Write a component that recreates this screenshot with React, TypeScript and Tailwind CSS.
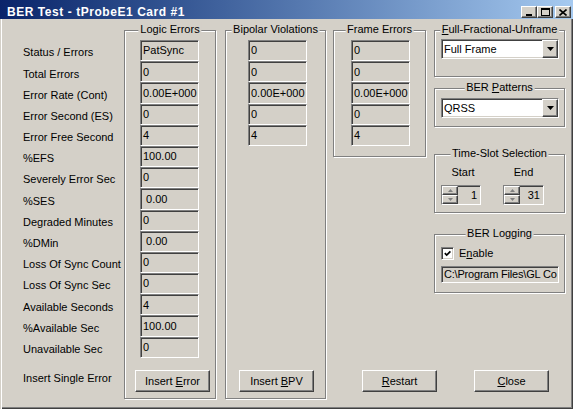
import React from 'react';

// classic win32 3d edges
const SUNKEN = 'border border-t-[#808080] border-l-[#808080] border-b-white border-r-white shadow-[inset_1px_1px_0_#404040,inset_-1px_-1px_0_#d4d0c8]';
const RAISED = 'border border-t-white border-l-white border-b-[#404040] border-r-[#404040] shadow-[inset_-1px_-1px_0_#808080]';
const ETCHED = 'border border-[#808080] shadow-[inset_1px_1px_0_#fff,1px_1px_0_#fff]';

const rows: [string, string][] = [
  ['Status / Errors', 'PatSync'],
  ['Total Errors', '0'],
  ['Error Rate (Cont)', '0.00E+000'],
  ['Error Second (ES)', '0'],
  ['Error Free Second', '4'],
  ['%EFS', '100.00'],
  ['Severely Error Sec', '0'],
  ['%SES', ' 0.00'],
  ['Degraded Minutes', '0'],
  ['%DMin', ' 0.00'],
  ['Loss Of Sync Count', '0'],
  ['Loss Of Sync Sec', '0'],
  ['Available Seconds', '4'],
  ['%Available Sec', '100.00'],
  ['Unavailable Sec', '0'],
];

const shortRows = ['0', '0', '0.00E+000', '0', '4'];

const Field = ({ v }: { v: string }) => (
  <div className={`${SUNKEN} h-full w-[59px] bg-[#d4d0c8] pl-[2px] flex items-center whitespace-pre`}>{v}</div>
);

const Group = ({ title, className, children }: { title: React.ReactNode; className: string; children?: React.ReactNode }) => (
  <div className={`relative ${ETCHED} ${className}`}>
    <span className="absolute left-1/2 -translate-x-1/2 top-[-9px] bg-[#d4d0c8] px-[2px] leading-[14px] whitespace-nowrap">{title}</span>
    {children}
  </div>
);

const Btn = ({ children }: { children: React.ReactNode }) => (
  <button type="button" className={`${RAISED} w-[75px] h-[22px] bg-[#d4d0c8] flex items-center justify-center`}>
    <span className="whitespace-pre">{children}</span>
  </button>
);

const Combo = ({ value }: { value: string }) => (
  <div className={`${SUNKEN} w-[118px] h-[20px] bg-white flex`}>
    <span className="flex-1 pl-[2px] flex items-center">{value}</span>
    <div className={`${RAISED} w-[16px] h-full bg-[#d4d0c8] flex items-center justify-center`}>
      <svg width="7" height="4" viewBox="0 0 7 4"><path d="M0 0h7L3.5 4z" fill="#000" /></svg>
    </div>
  </div>
);

const Spin = ({ v, className }: { v: string; className: string }) => (
  <div className={`${SUNKEN} h-[20px] bg-[#d4d0c8] flex ${className}`}>
    <div className="w-[16px] flex flex-col">
      <div className={`${RAISED} h-[9px] bg-[#d4d0c8] flex items-center justify-center`}>
        <svg width="5" height="3" viewBox="0 0 5 3"><path d="M2.5 0L5 3H0z" fill="#808080" /></svg>
      </div>
      <div className={`${RAISED} h-[9px] bg-[#d4d0c8] flex items-center justify-center`}>
        <svg width="5" height="3" viewBox="0 0 5 3"><path d="M0 0h5L2.5 3z" fill="#808080" /></svg>
      </div>
    </div>
    <span className="flex-1 text-right pr-[3px] flex items-center justify-end">{v}</span>
  </div>
);

const CapBtn = ({ children, className = '' }: { children: React.ReactNode; className?: string }) => (
  <div className={`${RAISED} w-[16px] h-[12px] bg-[#d4d0c8] flex items-center justify-center ${className}`}>{children}</div>
);

export default function App() {
  return (
    <div className="w-[573px] h-[409px] bg-[#d4d0c8] overflow-hidden flex flex-col font-['Liberation_Sans',Arial,sans-serif] text-[11px] text-black shadow-[inset_1px_0_0_#d4d0c8,inset_2px_0_0_#fff,inset_-1px_-1px_0_#404040,inset_-2px_-2px_0_#808080]">
      {/* title bar */}
      <div className="h-[19px] flex items-start bg-gradient-to-r from-[#0a246a] to-[#a6caf0]">
        <span className="pt-[6px] pl-[7px] leading-[12px] text-[12px] tracking-[0.55px] font-bold text-white whitespace-nowrap">BER Test - tProbeE1 Card #1</span>
        <div className="ml-auto mt-[6px] mr-[2px] flex">
          <CapBtn>
            <svg width="8" height="8" viewBox="0 0 8 8"><rect x="1" y="6" width="6" height="2" fill="#000" /></svg>
          </CapBtn>
          <CapBtn>
            <svg width="9" height="8" viewBox="0 0 9 8"><path d="M0 0h9v8H0zM1 2v5h7V2z" fill="#000" fillRule="evenodd" /></svg>
          </CapBtn>
          <CapBtn className="ml-[2px]">
            <svg width="8" height="7" viewBox="0 0 8 7"><path d="M0.5 0.5l7 6M7.5 0.5l-7 6" stroke="#000" strokeWidth="1.6" /></svg>
          </CapBtn>
        </div>
      </div>

      <div className="mt-[11px] h-[369px] flex">
        {/* labels */}
        <div className="w-[124px] pl-[23px] pt-[12px] flex flex-col">
          <div className="grid auto-rows-[21.2px]">
            {rows.map(([l]) => (
              <div key={l} className="flex items-center whitespace-nowrap">{l}</div>
            ))}
          </div>
          <div className="mt-auto mb-[10px] h-[22px] flex items-center">Insert Single Error</div>
        </div>

        <Group title="Logic Errors" className="w-[92px] h-full pl-[15px] pt-[9px] pb-[6px] flex flex-col">
          <div className="grid auto-rows-[21.2px]">
            {rows.map(([l, v]) => <Field key={l} v={v} />)}
          </div>
          <div className="mt-auto -ml-[5px]">
            <Btn>Insert <span className="underline">E</span>rror</Btn>
          </div>
        </Group>

        <Group title="Bipolar Violations" className="ml-[9px] w-[101px] h-full pl-[22px] pt-[9px] pb-[6px] flex flex-col">
          <div className="grid auto-rows-[21.2px]">
            {shortRows.map((v, i) => <Field key={i} v={v} />)}
          </div>
          <div className="mt-auto -ml-[9px]">
            <Btn>Insert <span className="underline">B</span>PV</Btn>
          </div>
        </Group>

        <div className="ml-[7px] flex-1 flex flex-col">
          <div className="flex items-start">
            <Group title="Frame Errors" className="w-[93px] h-[127px] pl-[17px] pt-[9px]">
              <div className="grid auto-rows-[21.2px]">
                {shortRows.map((v, i) => <Field key={i} v={v} />)}
              </div>
            </Group>

            <div className="ml-[8px] w-[131px] flex flex-col">
              <Group title={<><span className="underline">F</span>ull-Fractional-Unframe</>} className="h-[47px] pl-[6px] pt-[8px]">
                <Combo value="Full Frame" />
              </Group>
              <Group title={<>BER <span className="underline">P</span>atterns</>} className="mt-[11px] h-[39px] pl-[6px] pt-[9px]">
                <Combo value="QRSS" />
              </Group>
              <Group title="Time-Slot Selection" className="mt-[27px] h-[59px] pl-[6px] pt-[10px]">
                <div className="flex gap-[22px]">
                  <div className="flex flex-col items-center">
                    <span className="leading-[14px] pl-[4px]">Start</span>
                    <Spin v="1" className="mt-[6px] w-[40px]" />
                  </div>
                  <div className="flex flex-col items-center">
                    <span className="leading-[14px]">End</span>
                    <Spin v="31" className="mt-[6px] w-[41px]" />
                  </div>
                </div>
              </Group>
              <Group title="BER Logging" className="mt-[21px] h-[59px] pl-[6px] pt-[12px]">
                <div className="h-[13px] flex items-center gap-[5px]">
                  <div className={`${SUNKEN} w-[13px] h-[13px] bg-white flex items-center justify-center`}>
                    <svg width="7" height="7" viewBox="0 0 7 7"><path d="M0.8 3.2l1.9 1.9L6.4 1.3" fill="none" stroke="#000" strokeWidth="1.7" /></svg>
                  </div>
                  <span>E<span className="underline">n</span>able</span>
                </div>
                <div className={`${SUNKEN} mt-[6px] w-[118px] h-[17px] bg-[#d4d0c8] pl-[2px] flex items-center overflow-hidden whitespace-nowrap tracking-[-0.2px]`}>
                  {'C:\\Program Files\\GL Co'}
                </div>
              </Group>
            </div>
          </div>

          <div className="mt-auto mb-[7px] pl-[29px] flex gap-[37px]">
            <Btn><span className="underline">R</span>estart</Btn>
            <Btn><span className="underline">C</span>lose</Btn>
          </div>
        </div>
      </div>
    </div>
  );
}
